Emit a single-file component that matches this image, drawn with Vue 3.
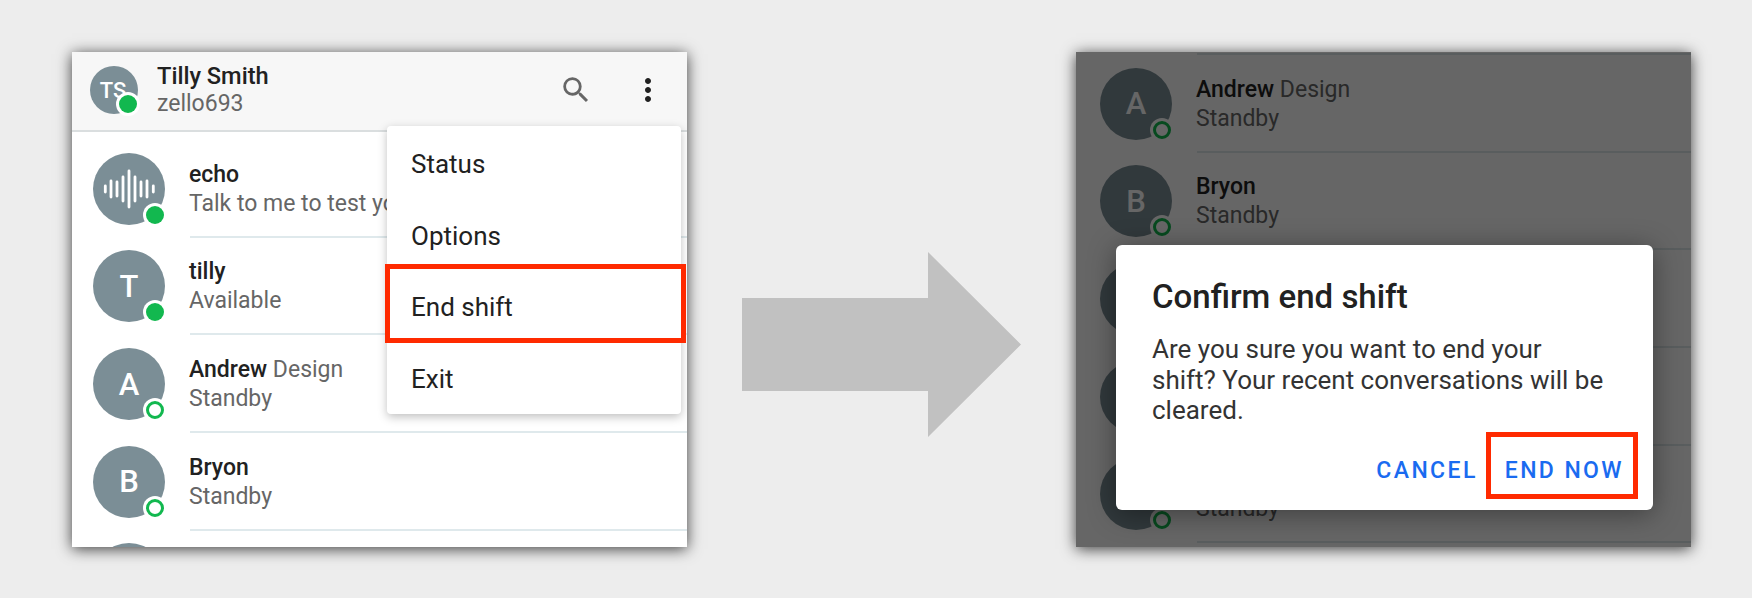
<template>
  <div class="page">
    <div class="phone">
      <div class="top-bar">
        <div class="avatar small">
          <span class="ts">TS</span>
          <span class="dot solid"></span>
        </div>
        <div class="me">
          <div class="me-name">Tilly Smith</div>
          <div class="me-user">zello693</div>
        </div>
        <svg class="search-icon" viewBox="0 0 24 24"><path d="M15.5 14h-.79l-.28-.27A6.47 6.47 0 0 0 16 9.5 6.5 6.5 0 1 0 9.5 16c1.61 0 3.09-.59 4.23-1.57l.27.28v.79l5 4.99L20.49 19l-4.99-5zm-6 0C7.01 14 5 11.99 5 9.5S7.01 5 9.5 5 14 7.01 14 9.5 11.99 14 9.5 14z"/></svg>
        <svg class="more-icon" viewBox="0 0 24 24"><path d="M12 8c1.1 0 2-.9 2-2s-.9-2-2-2-2 .9-2 2 .9 2 2 2zm0 2c-1.1 0-2 .9-2 2s.9 2 2 2 2-.9 2-2-.9-2-2-2zm0 6c-1.1 0-2 .9-2 2s.9 2 2 2 2-.9 2-2-.9-2-2-2z"/></svg>
      </div>
      <div class="list left-list">
        <div class="row" v-for="c in leftContacts" :key="c.name">
          <div class="avatar">
            <svg v-if="c.wave" class="wave" viewBox="0 0 72 72">
              <path v-for="b in waveBars" :key="b.x" :d="`M${b.x} ${36 - b.h}V${36 + b.h}`" />
            </svg>
            <template v-else>{{ c.initial }}</template>
            <span class="dot" :class="c.online ? 'solid' : 'ring'"></span>
          </div>
          <div class="info">
            <div class="name">{{ c.name }} <span v-if="c.role" class="role">{{ c.role }}</span></div>
            <div class="status">{{ c.status }}</div>
          </div>
        </div>
        <div class="row"><div class="avatar"></div></div>
      </div>
      <div class="menu">
        <div class="menu-item" v-for="m in menuItems" :key="m">{{ m }}</div>
      </div>
      <div class="highlight menu-highlight"></div>
    </div>

    <svg class="arrow" viewBox="0 0 279 185"><path d="M0 46H186V0L279 92.500L186 185V139H0Z" /></svg>

    <div class="phone dimmed">
      <div class="list right-list">
        <div class="row" v-for="c in rightContacts" :key="c.key">
          <div class="avatar">
            {{ c.initial }}
            <span class="dot ring"></span>
          </div>
          <div class="info">
            <div class="name">{{ c.name }} <span v-if="c.role" class="role">{{ c.role }}</span></div>
            <div class="status">{{ c.status }}</div>
          </div>
        </div>
      </div>
      <div class="scrim"></div>
      <div class="dialog">
        <div class="dialog-title">Confirm end shift</div>
        <div class="dialog-text">Are you sure you want to end your shift? Your recent conversations will be cleared.</div>
        <div class="dialog-actions">
          <span class="dialog-btn">CANCEL</span>
          <span class="dialog-btn">END NOW</span>
        </div>
      </div>
      <div class="highlight dialog-highlight"></div>
    </div>
  </div>
</template>

<script setup>
const leftContacts = [
  { name: 'echo', status: 'Talk to me to test your', wave: true, online: true },
  { name: 'tilly', status: 'Available', initial: 'T', online: true },
  { name: 'Andrew', role: 'Design', status: 'Standby', initial: 'A' },
  { name: 'Bryon', status: 'Standby', initial: 'B' }
]

// the three lower rows sit mostly behind the dialog
const rightContacts = [
  { key: 1, name: 'Andrew', role: 'Design', status: 'Standby', initial: 'A' },
  { key: 2, name: 'Bryon', status: 'Standby', initial: 'B' },
  { key: 3, name: '', status: '', initial: '' },
  { key: 4, name: '', status: '', initial: '' },
  { key: 5, name: '', status: 'Standby', initial: '' }
]

const menuItems = ['Status', 'Options', 'End shift', 'Exit']

const waveBars = [
  { x: 12.3, h: 3 },
  { x: 18, h: 8 },
  { x: 24, h: 7 },
  { x: 30, h: 12 },
  { x: 36, h: 18 },
  { x: 42, h: 12 },
  { x: 48, h: 7 },
  { x: 54, h: 8 },
  { x: 60.3, h: 3 }
]
</script>

<style>
html, body { margin: 0; background: #ededed; }
</style>

<style scoped>
.page {
  width: 1752px;
  height: 598px;
  box-sizing: border-box;
  padding: 52px 61px 0 72px;
  display: flex;
  align-items: flex-start;
  justify-content: space-between;
  background: #ededed;
  font-family: Roboto, "Liberation Sans", sans-serif;
  overflow: hidden;
}
.phone {
  position: relative;
  width: 615px;
  height: 495px;
  background: #fff;
  overflow: hidden;
  flex: none;
  box-shadow: 0 2px 14px rgba(0, 0, 0, 0.75);
}
.top-bar {
  height: 80px;
  box-sizing: border-box;
  display: flex;
  align-items: center;
  padding: 0 0 2px 18px;
  background: #f7f7f7;
  border-bottom: 2px solid #dadedf;
}
.avatar {
  position: relative;
  width: 72px;
  height: 72px;
  flex: none;
  border-radius: 50%;
  background: #7b8e96;
  color: #fff;
  font-weight: 500;
  font-size: 31px;
  display: flex;
  align-items: center;
  justify-content: center;
}
.avatar.small {
  width: 48px;
  height: 48px;
  font-size: 22px;
}
.ts { margin-right: 2px; }
.dot {
  position: absolute;
  right: 1px;
  bottom: 1px;
  width: 18px;
  height: 18px;
  box-sizing: border-box;
  border-radius: 50%;
  background: #12b84f;
  box-shadow: 0 0 0 3px #fff;
}
.dot.ring {
  background: #fff;
  border: 3.5px solid #12b84f;
}
.me { margin-left: 19px; flex: 1; }
.me-name {
  font-size: 23.6px;
  font-weight: 500;
  line-height: 27px;
  color: #212121;
}
.me-user {
  font-size: 23px;
  line-height: 27px;
  color: #666;
}
.search-icon {
  width: 34px;
  height: 34px;
  fill: #666;
  margin-right: 37px;
}
.more-icon {
  width: 36px;
  height: 36px;
  fill: #212121;
  margin-right: 21px;
}
.left-list { padding: 8px 0 0 21px; }
.right-list { padding: 3px 0 0 24px; }
.row {
  height: 97.67px;
  box-sizing: border-box;
  display: flex;
  align-items: center;
  gap: 24px;
  position: relative;
}
.row::after {
  content: "";
  position: absolute;
  left: 97px;
  right: 0;
  bottom: 0;
  height: 2px;
  background: #dfe9ec;
}
.right-list .row:first-child::before {
  content: "";
  position: absolute;
  left: 97px;
  right: 0;
  top: -2px;
  height: 2px;
  background: #dfe9ec;
}
.info { flex: 1; }
.name {
  font-size: 23px;
  font-weight: 500;
  line-height: 29px;
  min-height: 29px;
  color: #212121;
  white-space: nowrap;
}
.role { font-weight: 400; color: #666; }
.status {
  font-size: 23px;
  line-height: 29px;
  min-height: 29px;
  color: #666;
  white-space: nowrap;
}
.wave {
  width: 72px;
  height: 72px;
  fill: none;
  stroke: #fff;
  stroke-width: 2.8;
  stroke-linecap: round;
}
.menu {
  position: absolute;
  left: 315px;
  top: 74px;
  width: 294px;
  height: 288px;
  box-sizing: border-box;
  padding-top: 2px;
  background: #fff;
  border-radius: 4px;
  box-shadow: 0 3px 10px rgba(0, 0, 0, 0.25);
}
.menu-item {
  height: 71.75px;
  display: flex;
  align-items: center;
  padding-left: 24px;
  font-size: 26px;
  color: #212121;
}
.highlight {
  position: absolute;
  box-sizing: border-box;
  border: 5px solid #ff2a00;
}
.menu-highlight {
  left: 313px;
  top: 212px;
  width: 301px;
  height: 79px;
}
.scrim {
  position: absolute;
  inset: 0;
  background: rgba(0, 0, 0, 0.6);
}
.dialog {
  position: absolute;
  left: 40px;
  top: 193px;
  width: 537px;
  height: 265px;
  box-sizing: border-box;
  padding: 33px 29px 0 36px;
  background: #fff;
  border-radius: 6px;
  box-shadow: 0 4px 28px rgba(0, 0, 0, 0.4);
}
.dialog-title {
  font-size: 33px;
  font-weight: 500;
  line-height: 38px;
  color: #212121;
}
.dialog-text {
  margin-top: 18px;
  max-width: 456px;
  font-size: 26px;
  line-height: 30.5px;
  color: #333;
}
.dialog-actions {
  display: flex;
  justify-content: flex-end;
  gap: 27px;
  margin-top: 32px;
}
.dialog-btn {
  font-size: 23px;
  line-height: 26px;
  font-weight: 500;
  letter-spacing: 2.4px;
  color: #1a6bf0;
}
.dialog-highlight {
  left: 410px;
  top: 380px;
  width: 152px;
  height: 67px;
}
.arrow {
  width: 279px;
  height: 185px;
  fill: #c1c1c1;
  margin-top: 200px;
  flex: none;
}
</style>
